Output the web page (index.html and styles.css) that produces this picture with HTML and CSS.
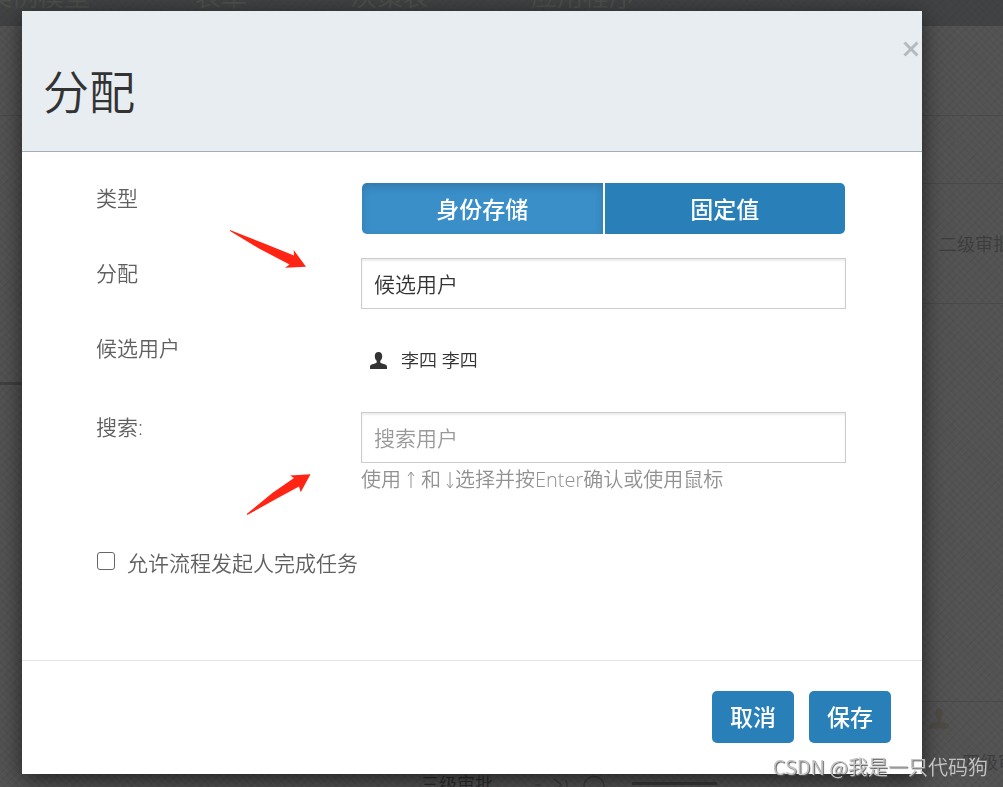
FILE: index.html
```html
<!DOCTYPE html>
<html lang="zh-CN">
<head>
<meta charset="utf-8">
<title>分配</title>
<link rel="stylesheet" href="styles.css">
</head>
<body>
<div class="backdrop" aria-hidden="true">
  <div class="navbar"></div>
  <span class="ghost nav-case">案例模型</span>
  <span class="ghost nav-form">表单</span>
  <span class="ghost nav-table">决策表</span>
  <span class="ghost nav-app">应用程序</span>
  <i class="rule rule-1"></i>
  <i class="rule rule-2"></i>
  <i class="rule rule-3"></i>
  <i class="rule rule-4"></i>
  <i class="rule rule-5"></i>
  <i class="rule rule-6"></i>
  <span class="ghost task task-right">二级审批</span>
  <span class="ghost task task-corner">四级审批</span>
  <span class="ghost task task-bottom">三级审批</span>
  <svg class="ghost-user" viewBox="0 0 16 16"><path d="M8 0C5.700 0 5 1.800 5 4c0 1.800.7 3.300 1.600 4.200v1.900C6.500 11 .8 11.500.3 13.400V16h15.400v-2.600C15.200 11.500 9.500 11 9.400 10.100V8.200C10.300 7.300 11 5.800 11 4c0-2.200-.7-4-3-4z"/></svg>
  <svg class="ghost-tools" viewBox="0 0 84 16"><path d="M3 8h4M18 3l6 5-6 5M27 4a6 6 0 0 1 0 8"/><circle cx="50" cy="9" r="8"/></svg>
</div>

<main class="modal" role="dialog" aria-labelledby="modal-title">
  <header class="modal-header">
    <button class="close" type="button" aria-label="关闭"><svg viewBox="0 0 16 16"><path d="M1.500 1.500l13 13M14.500 1.500l-13 13"/></svg></button>
    <h1 class="title" id="modal-title">分配</h1>
  </header>
  <form class="modal-body">
    <div class="row">
      <span class="label" id="type-label">类型</span>
      <div class="button-group" role="group" aria-labelledby="type-label">
        <button class="button active" type="button">身份存储</button>
        <button class="button" type="button">固定值</button>
      </div>
    </div>
    <div class="row">
      <label class="label" for="assignment">分配</label>
      <select class="control" id="assignment"><option>候选用户</option></select>
    </div>
    <div class="row">
      <span class="label">候选用户</span>
      <div class="user">
        <svg class="user-icon" viewBox="0 0 16 16"><path d="M8 0C5.500 0 4.500 1.700 4.500 4c0 1.800.8 3.400 1.800 4.300v1.600C6.200 10.900.4 11.300 0 13.300V16h16v-2.700c-.4-2-6.200-2.400-6.300-3.400V8.300c1-.9 1.800-2.500 1.800-4.300 0-2.300-1-4-3.500-4z"/></svg>
        <span>李四 李四</span>
      </div>
    </div>
    <div class="row">
      <label class="label" for="search">搜索:</label>
      <div>
        <input class="control" id="search" type="text" placeholder="搜索用户">
        <p class="help"><span>使用</span><svg class="key up" viewBox="0 0 10 18"><path d="M5 17V1M2 5l3-4 3 4"/></svg><span>和</span><svg class="key down" viewBox="0 0 10 18"><path d="M5 1v16M2 13l3 4 3-4"/></svg><span>选择并按Enter确认或使用鼠标</span></p>
      </div>
    </div>
    <label class="check"><input class="checkbox" type="checkbox"><span>允许流程发起人完成任务</span></label>
    <svg class="arrow arrow-top" viewBox="0 0 78 40" aria-hidden="true"><path d="M1 1L34 14 65 26.500 64.700 21 77 37.700 56 38.700 60.500 35.500 30 19.500 1 2Z"/></svg>
    <svg class="arrow arrow-bottom" viewBox="0 0 66 42" aria-hidden="true"><path d="M.7 41L27 19.500 48 5 44 2.500 64.500 1.300 54.700 19.300 53 13.500 30 26 1.300 42Z"/></svg>
  </form>
  <footer class="modal-footer">
    <button class="button" type="button">取消</button>
    <button class="button" type="button">保存</button>
  </footer>
</main>
<div class="watermark">CSDN @我是一只代码狗</div>
</body>
</html>
```
FILE: styles.css
```css
* {
  box-sizing: border-box;
}

body {
  margin: 0;
  min-height: 100vh;
  padding: 11px 81px 13px 22px;
  background: #515151;
  color: #606060;
  font-family: "Open Sans", "Noto Sans CJK SC", sans-serif;
  font-size: 21px;
  font-weight: 350;
  line-height: 30px;
}

button,
input,
select {
  font: inherit;
}

/* Dimmed editor behind the dialog */
.backdrop {
  position: fixed;
  inset: 0;
  overflow: hidden;
  background:
    repeating-linear-gradient(45deg, rgba(255, 255, 255, 0.02) 0 2px, transparent 2px 5px),
    repeating-linear-gradient(135deg, rgba(0, 0, 0, 0.04) 0 2px, transparent 2px 6px),
    #525252;
}

.navbar {
  height: 26px;
  background: rgba(46, 49, 53, 0.5);
}

.ghost {
  position: absolute;
  top: -19px;
  color: #4e4f4a;
  font-size: 26px;
  white-space: nowrap;
}

.nav-case { left: -14px; }
.nav-form { left: 195px; }
.nav-table { left: 351px; }
.nav-app { left: 531px; }

.task {
  color: #3c3c3c;
  font-size: 18px;
}

.task-right { top: 229px; left: 939px; }
.task-corner { top: 747px; left: 962px; }
.task-bottom { top: 769px; left: 421px; color: #2c2c2c; }

.rule {
  position: absolute;
  height: 1px;
  background: #494949;
}

.rule-1 { top: 115px; left: 0; right: 0; }
.rule-2 { top: 183px; left: 922px; right: 0; }
.rule-3 { top: 303px; left: 922px; right: 0; }
.rule-4 { top: 382px; left: 0; width: 22px; height: 3px; background: #404040; }
.rule-5 { top: 701px; left: 922px; right: 0; }
.rule-6 { top: 782px; left: 632px; width: 85px; height: 3px; background: #3a3a3a; }

.ghost-user {
  position: absolute;
  top: 706px;
  left: 929px;
  width: 20px;
  height: 25px;
  fill: #4e4b46;
}

.ghost-tools {
  position: absolute;
  top: 775px;
  left: 529px;
  width: 110px;
  height: 20px;
  fill: none;
  stroke: #3c3c3c;
  stroke-width: 1;
}

.modal {
  position: relative;
  background: #fff;
  box-shadow: 0 6px 22px rgba(0, 0, 0, 0.6);
}

.modal-header {
  position: relative;
  padding: 45px 21px 25px;
  border-bottom: 1px solid #a4adb9;
  background: #e8edf1;
}

.title {
  margin: 0;
  color: #333;
  font-size: 46px;
  font-weight: 350;
  line-height: 70px;
}

.close {
  position: absolute;
  top: 28px;
  right: 1px;
  display: grid;
  place-items: center;
  width: 20px;
  height: 20px;
  padding: 0;
  border: 0;
  background: none;
}

.close svg {
  width: 16px;
  height: 16px;
  fill: none;
  stroke: #b7babc;
  stroke-width: 3;
}

.modal-body {
  position: relative;
  display: grid;
  gap: 24px;
  padding: 31px 76px 82px 74px;
}

.row {
  display: grid;
  grid-template-columns: 265px 1fr;
  align-items: start;
}

.button {
  height: 52px;
  padding: 0 18px;
  border: 0;
  border-radius: 5px;
  background: #2980b9;
  color: #fff;
  font-size: 23px;
  font-weight: 500;
}

.button-group {
  display: grid;
  grid-template-columns: 1fr 1fr;
  gap: 2px;
  padding: 0 1px;
}

.button-group .button {
  height: 51px;
}

.button-group .button:first-child {
  border-radius: 5px 0 0 5px;
}

.button-group .button:last-child {
  border-radius: 0 5px 5px 0;
}

.button.active {
  background: #3a8fc9;
  box-shadow: inset 0 4px 8px rgba(0, 0, 0, 0.15);
}

.control {
  display: block;
  width: 100%;
  height: 51px;
  padding: 0 12px;
  border: 1px solid #ccc;
  border-radius: 0;
  appearance: none;
  background: #fff;
  box-shadow: inset 0 2px 2px rgba(0, 0, 0, 0.08);
  color: #333;
}

.control::placeholder {
  color: #999;
  opacity: 1;
}

.user {
  display: flex;
  align-items: center;
  gap: 14px;
  padding: 12px 9px 13px;
  color: #333;
  font-size: 18px;
}

.user-icon {
  width: 17px;
  height: 17px;
  fill: #333;
}

.help {
  display: flex;
  align-items: center;
  margin: 0;
  color: #919191;
  font-size: 20px;
  line-height: 34px;
}

.key {
  width: 10px;
  height: 18px;
  fill: none;
  stroke: #919191;
  stroke-width: 1;
}

.up {
  margin: 0 5px;
}

.down {
  margin-left: 4px;
}

.check {
  display: flex;
  align-items: center;
  gap: 12px;
  padding-top: 27px;
}

.checkbox {
  width: 18px;
  height: 18px;
  margin: 0 0 4px 1px;
  border: 1px solid #666;
  border-radius: 3px;
  appearance: none;
  background: #fff;
}

.checkbox:checked {
  background: #2980b9;
}

.arrow {
  position: absolute;
  fill: #ff2414;
}

.arrow-top {
  top: 77px;
  left: 207px;
  width: 78px;
  height: 40px;
}

.arrow-bottom {
  top: 321px;
  left: 224px;
  width: 66px;
  height: 42px;
}

.modal-footer {
  display: flex;
  justify-content: flex-end;
  gap: 15px;
  padding: 30px 31px 31px;
  border-top: 1px solid #e5e5e5;
}

.watermark {
  position: fixed;
  right: 15px;
  bottom: 5px;
  color: #c4c4c4;
  font-family: "Noto Sans CJK SC", sans-serif;
  font-size: 20px;
  text-shadow: 1px 1px 1px #555;
}
```
